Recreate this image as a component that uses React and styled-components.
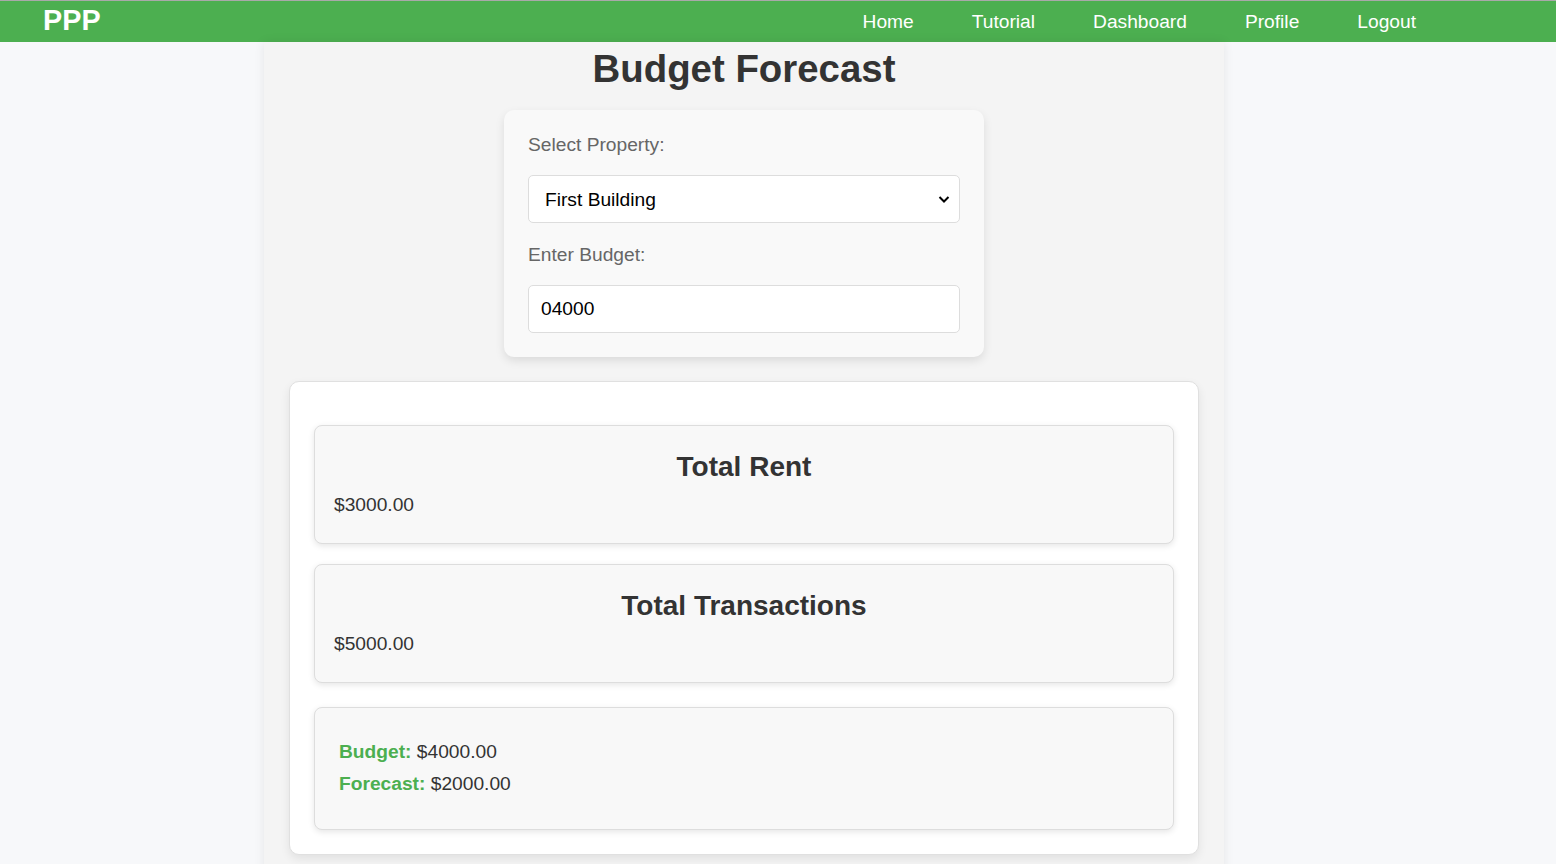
import styled, { createGlobalStyle } from 'styled-components';

const GlobalStyle = createGlobalStyle`
  html, body {
    margin: 0;
    padding: 0;
    background: #f7f8fa;
    font-family: "Liberation Sans", Arial, sans-serif;
  }
`;

const NavBar = styled.nav`
  height: 41px;
  border-top: 1px solid #a9a9a9;
  background: #4caf50;
  display: flex;
  align-items: center;
  justify-content: space-between;
  padding: 0 140px 0 43px;
`;

const Logo = styled.div`
  color: #fff;
  font-size: 28.8px;
  font-weight: 700;
  line-height: 1;
  margin-top: -3px;
`;

const NavLinks = styled.div`
  display: flex;
  gap: 58px;
`;

const NavLink = styled.a`
  color: #fff;
  font-size: 19.2px;
  text-decoration: none;
`;

const Container = styled.main`
  width: 910px;
  margin-left: 264px;
  padding: 5px 25px 30px;
  background: #f4f4f4;
  box-shadow: 0 0 10px rgba(0, 0, 0, 0.08);
  min-height: 820px;
`;

const PageTitle = styled.h1`
  margin: 0 0 19px;
  text-align: center;
  font-size: 38.4px;
  color: #333;
`;

const FormCard = styled.form`
  width: 432px;
  margin: 0 auto;
  padding: 24px;
  background: #f9f9f9;
  border-radius: 10px;
  box-shadow: 0 4px 10px rgba(0, 0, 0, 0.1);
`;

const Label = styled.label`
  display: block;
  color: #666;
  font-size: 19.2px;
  margin-bottom: 19px;
`;

const SelectWrap = styled.div`
  position: relative;
  margin-bottom: 21px;
`;

const Select = styled.select`
  appearance: none;
  width: 100%;
  height: 48px;
  padding: 0 40px 0 16px;
  border: 1px solid #ddd;
  border-radius: 5px;
  background: #fff;
  color: #000;
  font-family: inherit;
  font-size: 19.2px;
`;

const Chevron = styled.svg`
  position: absolute;
  right: 10px;
  top: 18px;
  pointer-events: none;
`;

const Input = styled.input`
  box-sizing: border-box;
  width: 100%;
  height: 48px;
  padding: 0 12px;
  border: 1px solid #ddd;
  border-radius: 5px;
  background: #fff;
  color: #000;
  font-family: inherit;
  font-size: 19.2px;
`;

const Results = styled.section`
  margin-top: 24px;
  padding: 23px 24px 24px;
  background: #fff;
  border: 1px solid #e0e0e0;
  border-radius: 10px;
  box-shadow: 0 4px 10px rgba(0, 0, 0, 0.08);
`;

const StatCard = styled.div`
  margin-top: ${(p) => p.$gap}px;
  padding: ${(p) => (p.$summary ? '23px 24px 24px' : '25px 19px 20px')};
  background: #f8f8f8;
  border: 1px solid #ddd;
  border-radius: 8px;
  box-shadow: 0 2px 6px rgba(0, 0, 0, 0.1);
`;

const StatTitle = styled.h3`
  margin: 0 0 11px;
  text-align: center;
  font-size: 28px;
  color: #333;
`;

const StatValue = styled.p`
  margin: 0 0 7px;
  font-size: 19.2px;
  color: #333;
`;

const SummaryLine = styled.p`
  margin: 10px 0;
  font-size: 19.2px;
  color: #333;
`;

const Key = styled.strong`
  color: #4caf50;
`;

export default function App() {
  return (
    <>
      <GlobalStyle />
      <NavBar>
        <Logo>PPP</Logo>
        <NavLinks>
          <NavLink href="#">Home</NavLink>
          <NavLink href="#">Tutorial</NavLink>
          <NavLink href="#">Dashboard</NavLink>
          <NavLink href="#">Profile</NavLink>
          <NavLink href="#">Logout</NavLink>
        </NavLinks>
      </NavBar>
      <Container>
        <PageTitle>Budget Forecast</PageTitle>
        <FormCard>
          <Label htmlFor="property">Select Property:</Label>
          <SelectWrap>
            <Select id="property" defaultValue="first">
              <option value="first">First Building</option>
            </Select>
            <Chevron width="12" height="12" viewBox="0 0 12 12">
              <path d="M1.5 4 L6 8.5 L10.5 4" fill="none" stroke="#000" strokeWidth="2" />
            </Chevron>
          </SelectWrap>
          <Label htmlFor="budget">Enter Budget:</Label>
          <Input id="budget" type="text" defaultValue="04000" />
        </FormCard>
        <Results>
          <StatCard $gap={20}>
            <StatTitle>Total Rent</StatTitle>
            <StatValue>$3000.00</StatValue>
          </StatCard>
          <StatCard $gap={20}>
            <StatTitle>Total Transactions</StatTitle>
            <StatValue>$5000.00</StatValue>
          </StatCard>
          <StatCard $gap={24} $summary>
            <SummaryLine>
              <Key>Budget:</Key> $4000.00
            </SummaryLine>
            <SummaryLine>
              <Key>Forecast:</Key> $2000.00
            </SummaryLine>
          </StatCard>
        </Results>
      </Container>
    </>
  );
}
